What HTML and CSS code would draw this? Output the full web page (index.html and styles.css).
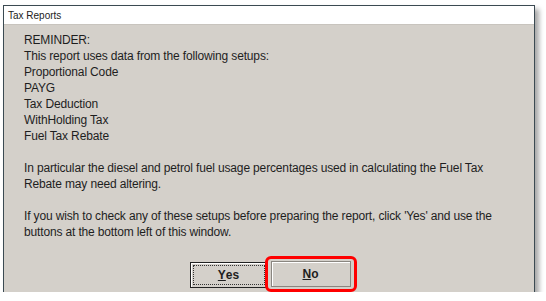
FILE: index.html
```html
<!DOCTYPE html>
<html lang="en">
<head>
    <meta charset="UTF-8">
    <title>Tax Reports</title>
    <link rel="stylesheet" href="styles.css">
</head>
<body>
    <div class="dialog">
        <div class="dialog-title">Tax Reports</div>
        <div class="dialog-body">
            <div class="message">
                <p>REMINDER:<br>
                This report uses data from the following setups:<br>
                Proportional Code<br>
                PAYG<br>
                Tax Deduction<br>
                WithHolding Tax<br>
                Fuel Tax Rebate</p>
                <p>In particular the diesel and petrol fuel usage percentages used in calculating the Fuel Tax Rebate may need altering.</p>
                <p>If you wish to check any of these setups before preparing the report, click 'Yes' and use the buttons at the bottom left of this window.</p>
            </div>
            <div class="button-row">
                <button class="dlg-button default"><span class="focus"><u>Y</u>es</span></button>
                <div class="highlight">
                    <button class="dlg-button"><u>N</u>o</button>
                </div>
            </div>
        </div>
    </div>
</body>
</html>
```
FILE: styles.css
```css
* {
    margin: 0;
    padding: 0;
    box-sizing: border-box;
}

body {
    background: #ffffff;
    font-family: "Liberation Sans", Arial, sans-serif;
    color: #1e1e1e;
    padding: 5px 0 0 3px;
}

.dialog {
    width: 532px;
    height: 287px;
    border: 1px solid #3b4a52;
    border-bottom: none;
    background: #d4d0ca;
    display: flex;
    flex-direction: column;
    box-shadow: 4px 4px 5px rgba(0, 0, 0, 0.35);
}

.dialog-title {
    background: #ffffff;
    height: 19px;
    font-size: 10px;
    line-height: 19px;
    padding-left: 4px;
    color: #222;
    border-bottom: 1px solid #c8c4be;
}

.dialog-body {
    flex: 1;
    display: flex;
    flex-direction: column;
    border-bottom: 2px solid #2f7fc1;
    box-shadow: 0 1px 0 #3b4a52;
}

.message {
    padding: 7px 10px 0 20px;
    font-size: 12px;
    line-height: 16px;
    letter-spacing: -0.15px;
}

.message p {
    margin-bottom: 16px;
}

.button-row {
    margin-top: auto;
    display: flex;
    justify-content: center;
    align-items: center;
    padding: 0 0 8px 8px;
}

.dlg-button {
    width: 78px;
    height: 26px;
    font-family: inherit;
    font-size: 12px;
    font-weight: bold;
    color: #1e1e1e;
    background: #d4d0ca;
    border: 1px solid #8a8680;
    box-shadow: inset 1px 1px 0 #ffffff;
}

.dlg-button.default {
    border: 1px solid #222;
    padding: 2px;
    margin-top: 1px;
    margin-right: -3px;
}

.focus {
    display: flex;
    align-items: center;
    justify-content: center;
    height: 100%;
    border: 1px dotted #333;
}

.highlight {
    border: 3px solid #ff0000;
    border-radius: 6px;
    padding: 2px 3px;
}

.highlight .dlg-button {
    width: 80px;
    display: block;
}
```
